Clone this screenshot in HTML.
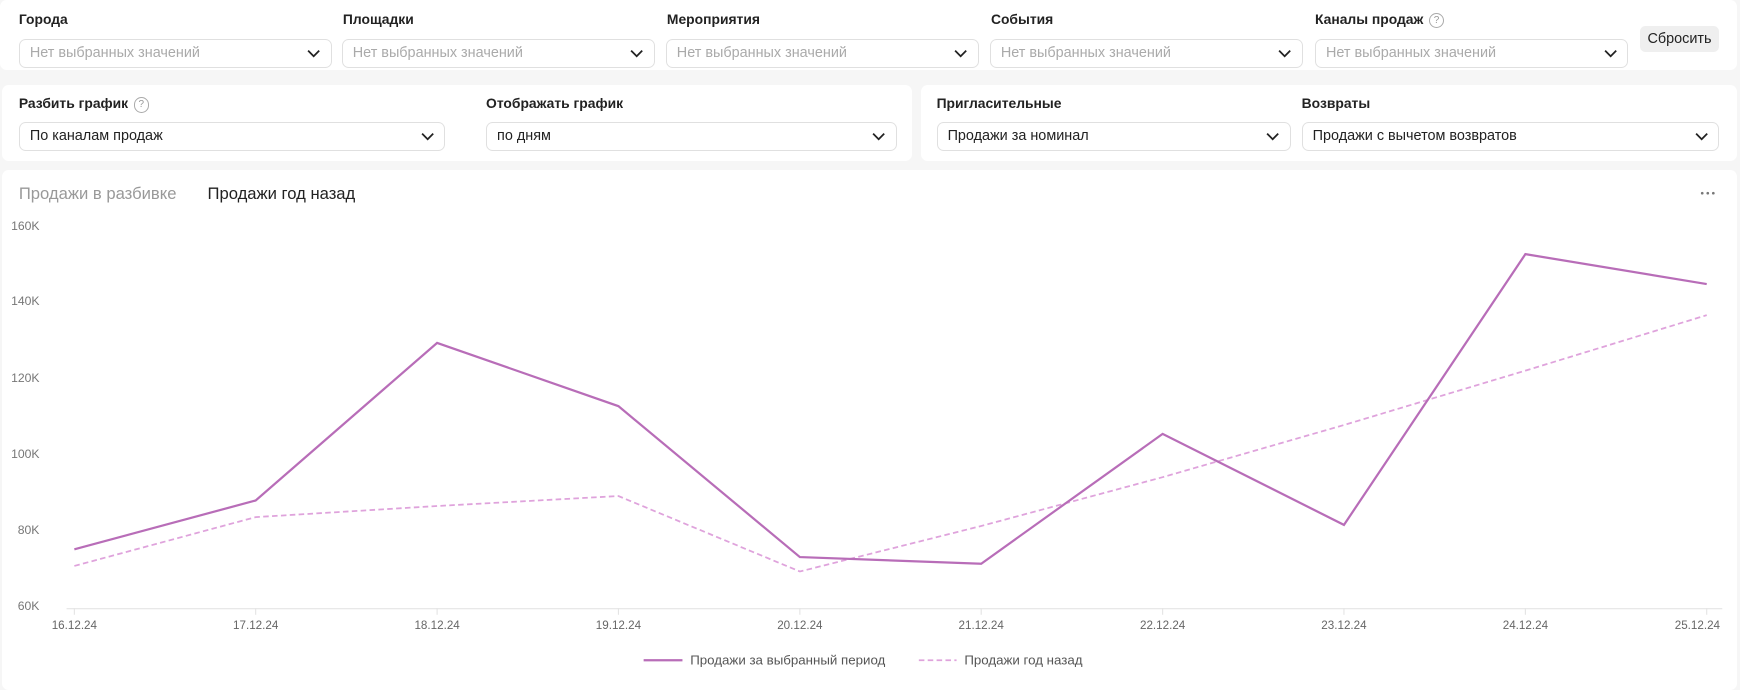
<!DOCTYPE html>
<html><head><meta charset="utf-8"><style>
html,body{margin:0;padding:0}
body{width:1568px;height:622px;zoom:1.1097;background:#f6f6f6;font-family:"Liberation Sans",sans-serif;position:relative;overflow:hidden;color:#222}
.p{position:absolute;background:#fff;border-radius:6px}
.l{position:absolute;font-size:12.5px;font-weight:bold;color:#222;white-space:nowrap}
.s{position:absolute;height:26px;box-sizing:border-box;border:1px solid #e0e0e0;border-radius:6px;font-size:13px;line-height:24px;padding-left:9px;white-space:nowrap;background:#fff}
.s.g{color:#aaa}
.s svg{position:absolute;right:9px;top:8px}
.q{display:inline-block;width:12px;height:12px;border:1px solid #aaa;border-radius:50%;font-size:9px;font-weight:normal;line-height:12px;text-align:center;color:#999;margin-left:5px;vertical-align:1px}
.t{position:absolute;font-size:11px;color:#777}
</style></head><body>
<div class="p" style="left:0;top:0;width:1565px;height:63px"></div>
<div class="p" style="left:2px;top:77px;width:820px;height:68px"></div>
<div class="p" style="left:830px;top:77px;width:735px;height:68px"></div>
<div class="p" style="left:2px;top:153px;width:1563px;height:469px"></div>

<div class="l" style="left:17px;top:10px">Города</div>
<div class="l" style="left:309px;top:10px">Площадки</div>
<div class="l" style="left:601px;top:10px">Мероприятия</div>
<div class="l" style="left:893px;top:10px">События</div>
<div class="l" style="left:1185px;top:10px">Каналы продаж<span class="q">?</span></div>

<div class="s g" style="left:17px;top:35px;width:282px">Нет выбранных значений<svg width="12" height="8"><path d="M1 1.5l5 5 5-5" fill="none" stroke="#222" stroke-width="1.6"/></svg></div>
<div class="s g" style="left:308px;top:35px;width:282px">Нет выбранных значений<svg width="12" height="8"><path d="M1 1.5l5 5 5-5" fill="none" stroke="#222" stroke-width="1.6"/></svg></div>
<div class="s g" style="left:600px;top:35px;width:282px">Нет выбранных значений<svg width="12" height="8"><path d="M1 1.5l5 5 5-5" fill="none" stroke="#222" stroke-width="1.6"/></svg></div>
<div class="s g" style="left:892px;top:35px;width:282px">Нет выбранных значений<svg width="12" height="8"><path d="M1 1.5l5 5 5-5" fill="none" stroke="#222" stroke-width="1.6"/></svg></div>
<div class="s g" style="left:1185px;top:35px;width:282px">Нет выбранных значений<svg width="12" height="8"><path d="M1 1.5l5 5 5-5" fill="none" stroke="#222" stroke-width="1.6"/></svg></div>
<div style="position:absolute;left:1478px;top:23px;width:71px;height:24px;background:#efefef;border-radius:5px;font-size:13px;line-height:24px;text-align:center">Сбросить</div>

<div class="l" style="left:17px;top:86px">Разбить график<span class="q">?</span></div>
<div class="l" style="left:438px;top:86px">Отображать график</div>
<div class="l" style="left:844px;top:86px">Пригласительные</div>
<div class="l" style="left:1173px;top:86px">Возвраты</div>
<div class="s" style="left:17px;top:110px;width:384px">По каналам продаж<svg width="12" height="8"><path d="M1 1.5l5 5 5-5" fill="none" stroke="#222" stroke-width="1.6"/></svg></div>
<div class="s" style="left:438px;top:110px;width:370px">по дням<svg width="12" height="8"><path d="M1 1.5l5 5 5-5" fill="none" stroke="#222" stroke-width="1.6"/></svg></div>
<div class="s" style="left:844px;top:110px;width:319px">Продажи за номинал<svg width="12" height="8"><path d="M1 1.5l5 5 5-5" fill="none" stroke="#222" stroke-width="1.6"/></svg></div>
<div class="s" style="left:1173px;top:110px;width:376px">Продажи с вычетом возвратов<svg width="12" height="8"><path d="M1 1.5l5 5 5-5" fill="none" stroke="#222" stroke-width="1.6"/></svg></div>

<div class="l" style="left:17px;top:166px;font-size:15px;font-weight:normal;color:#999">Продажи в разбивке</div>
<div class="l" style="left:187px;top:166px;font-size:15px;font-weight:normal;color:#222">Продажи год назад</div>
<svg style="position:absolute;left:1532px;top:172px" width="14" height="4"><circle cx="2" cy="2" r="1.2" fill="#777"/><circle cx="7" cy="2" r="1.2" fill="#777"/><circle cx="12" cy="2" r="1.2" fill="#777"/></svg>

<div class="t" style="left:10px;top:197px">160K</div>
<div class="t" style="left:10px;top:265px">140K</div>
<div class="t" style="left:10px;top:334px">120K</div>
<div class="t" style="left:10px;top:403px">100K</div>
<div class="t" style="left:16px;top:471px">80K</div>
<div class="t" style="left:16px;top:540px">60K</div>

<svg style="position:absolute;left:0;top:0" width="1568" height="622">
<line x1="60" y1="548.5" x2="1552" y2="548.5" stroke="#e4e4e4" stroke-width="1"/>
<g stroke="#e4e4e4">
<line x1="67" y1="548" x2="67" y2="554"/><line x1="230.4" y1="548" x2="230.4" y2="554"/><line x1="393.9" y1="548" x2="393.9" y2="554"/><line x1="557.3" y1="548" x2="557.3" y2="554"/><line x1="720.8" y1="548" x2="720.8" y2="554"/><line x1="884.2" y1="548" x2="884.2" y2="554"/><line x1="1047.7" y1="548" x2="1047.7" y2="554"/><line x1="1211.1" y1="548" x2="1211.1" y2="554"/><line x1="1374.6" y1="548" x2="1374.6" y2="554"/><line x1="1538" y1="548" x2="1538" y2="554"/>
</g>
<polyline fill="none" stroke="#dfa3dc" stroke-width="1.6" stroke-dasharray="5,3" points="67,510 230.4,466 393.9,456 557.3,447 720.8,515 884.2,474 1047.7,430 1211.1,383 1374.6,334 1538,284"/>
<polyline fill="none" stroke="#b86db8" stroke-width="2" points="67,495 230.4,451 393.9,309 557.3,366 720.8,502 884.2,508 1047.7,391 1211.1,473 1374.6,229 1538,256"/>
<line x1="580" y1="595" x2="615" y2="595" stroke="#b86db8" stroke-width="2"/>
<line x1="828" y1="595" x2="862" y2="595" stroke="#dfa3dc" stroke-width="1.6" stroke-dasharray="5,3"/>
<g font-family="Liberation Sans, sans-serif" font-size="10.5" fill="#666" text-anchor="middle">
<text x="67" y="567">16.12.24</text><text x="230.4" y="567">17.12.24</text><text x="393.9" y="567">18.12.24</text><text x="557.3" y="567">19.12.24</text><text x="720.8" y="567">20.12.24</text><text x="884.2" y="567">21.12.24</text><text x="1047.7" y="567">22.12.24</text><text x="1211.1" y="567">23.12.24</text><text x="1374.6" y="567">24.12.24</text><text x="1550" y="567" text-anchor="end">25.12.24</text>
</g>
<g font-family="Liberation Sans, sans-serif" font-size="12" fill="#555">
<text x="622" y="599">Продажи за выбранный период</text>
<text x="869" y="599">Продажи год назад</text>
</g>
</svg>
</body></html>
